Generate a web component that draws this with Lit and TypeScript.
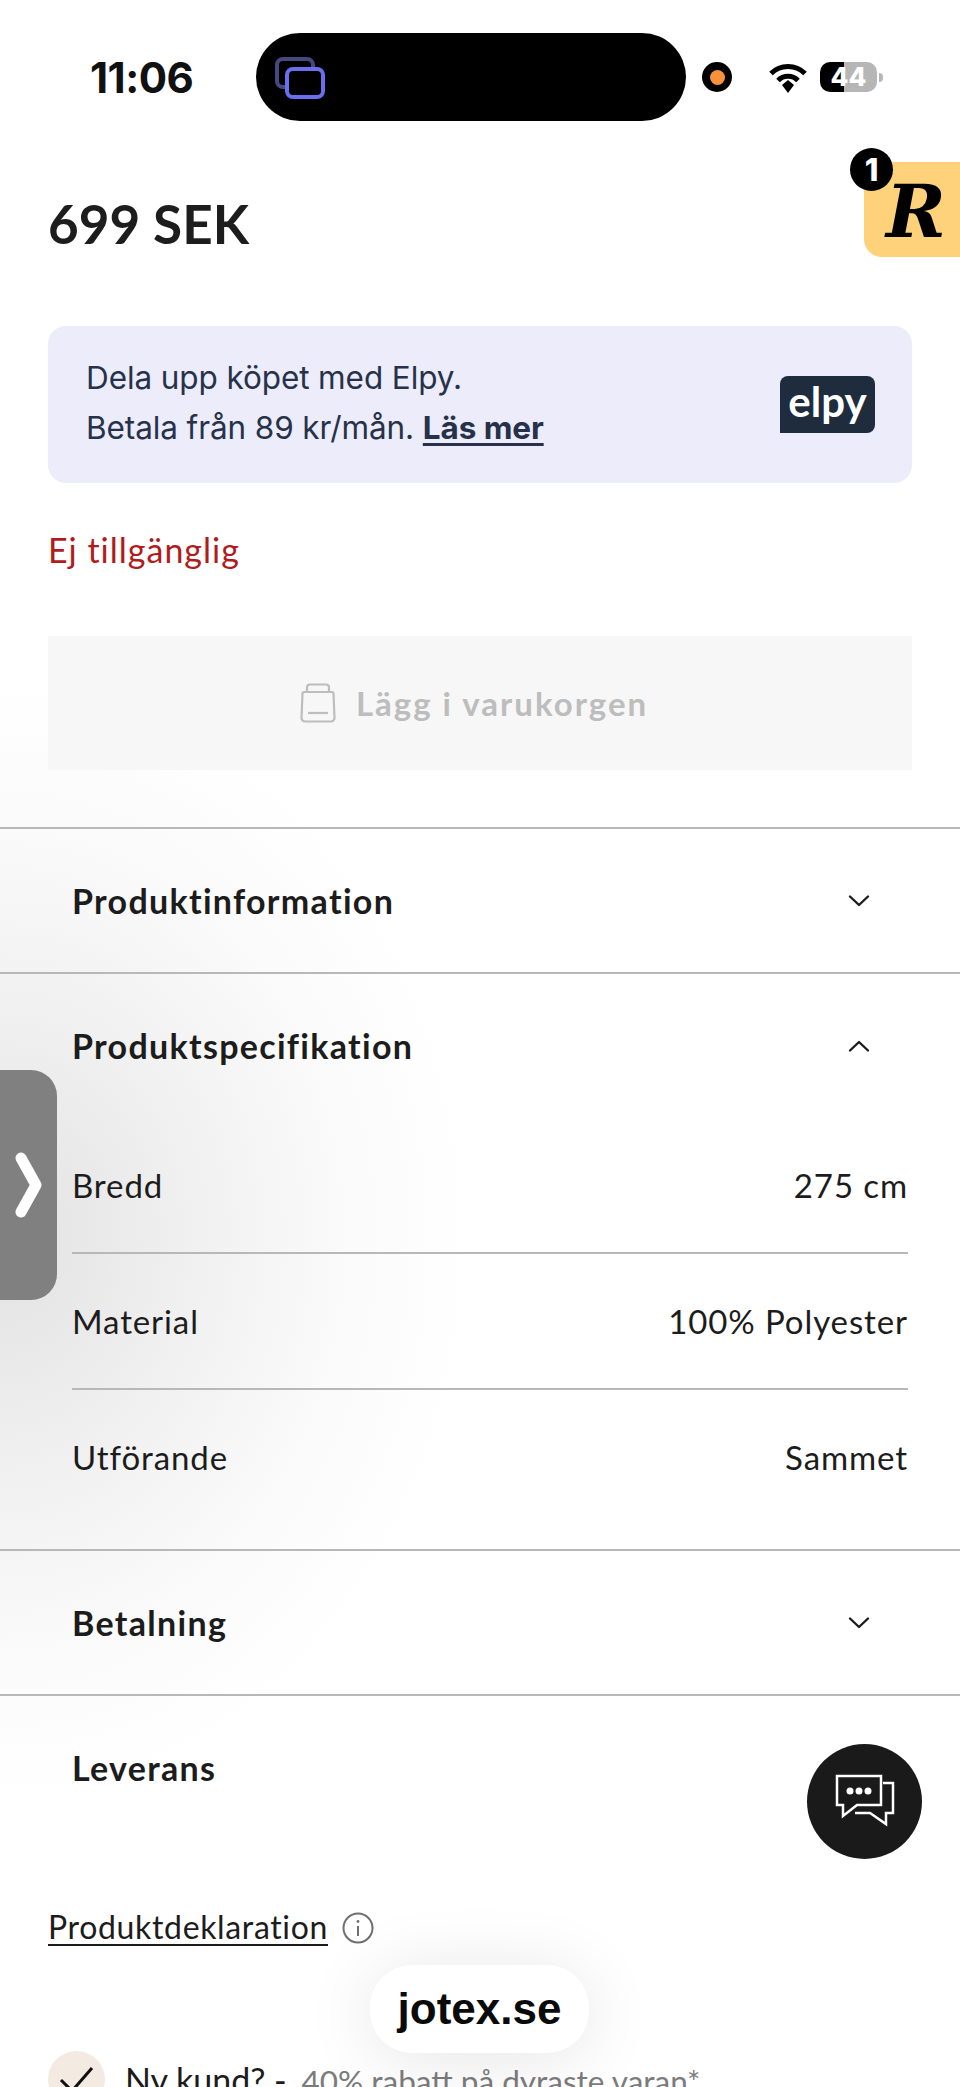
import { LitElement, html, css, svg } from 'lit';
import { customElement } from 'lit/decorators.js';

const chevron = (up: boolean) => html`<svg class="chev" width="24" height="14" viewBox="0 0 24 14">
  <path d=${up ? 'M3 11.5 12 3l9 8.5' : 'M3 2.5 12 11l9-8.5'} fill="none" stroke="#1c1c1c" stroke-width="2.4" stroke-linecap="round" stroke-linejoin="round"/>
</svg>`;

const specs = [
  ['Bredd', '275 cm'],
  ['Material', '100% Polyester'],
  ['Utförande', 'Sammet'],
];

@customElement('app-root')
export class AppRoot extends LitElement {
  static styles = css`
    :host {
      display: block;
      position: relative;
      width: 960px;
      height: 2087px;
      overflow: hidden;
      color: #1c1c1c;
      font-family: 'Lato', sans-serif;
      background: radial-gradient(ellipse 470px 560px at 0 1240px, #e2e2e2 0%, #f0f0f0 40%, #fafafa 72%, #ffffff 100%), #fff;
    }
    .status {
      height: 162px;
      position: relative;
    }
    .time {
      position: absolute;
      left: 90px;
      top: 54px;
      font: 700 42px/48px 'Inter', sans-serif;
      letter-spacing: -0.5px;
      color: #111;
    }
    .island {
      position: absolute;
      left: 256px;
      top: 33px;
      width: 430px;
      height: 88px;
      border-radius: 44px;
      background: #000;
    }
    .island svg {
      position: absolute;
      left: 17px;
      top: 22px;
    }
    .cam {
      position: absolute;
      left: 702px;
      top: 62px;
      width: 30px;
      height: 30px;
      border-radius: 50%;
      background: #000;
      display: flex;
      align-items: center;
      justify-content: center;
    }
    .cam i {
      width: 15px;
      height: 15px;
      border-radius: 50%;
      background: #f6923a;
    }
    .wifi {
      position: absolute;
      left: 768px;
      top: 62px;
    }
    .battery {
      position: absolute;
      left: 820px;
      top: 62px;
      width: 57px;
      height: 30px;
      border-radius: 10px;
      background: linear-gradient(90deg, #000 0 24px, #b6b6b6 24px);
      color: #fff;
      font: 800 26px/30px 'Inter', sans-serif;
      text-align: center;
    }
    .tip {
      position: absolute;
      left: 879px;
      top: 73px;
      width: 4px;
      height: 9px;
      border-radius: 0 4px 4px 0;
      background: #b6b6b6;
    }
    .rewards {
      position: absolute;
      left: 864px;
      top: 162px;
      width: 96px;
      height: 95px;
      border-radius: 0 0 0 18px;
      background: #fdd27a;
      color: #000;
      font: italic 700 72px/95px 'DejaVu Serif', serif;
      text-align: center;
      z-index: 2;
    }
    .rewards span {
      display: block;
      margin-left: 8px;
      margin-top: 2px;
    }
    .count {
      position: absolute;
      left: 850px;
      top: 148px;
      width: 43px;
      height: 43px;
      border-radius: 50%;
      background: #000;
      color: #fff;
      font: 800 31px/43px 'Inter', sans-serif;
      text-align: center;
      z-index: 3;
    }
    .price {
      margin: 32px 48px 72px;
      font-size: 53px;
      line-height: 60px;
      font-weight: 700;
      color: #1d1d1d;
    }
    .elpy {
      margin: 0 48px;
      height: 157px;
      box-sizing: border-box;
      padding: 0 38px 4px;
      border-radius: 18px;
      background: #ececfb;
      display: flex;
      align-items: center;
      justify-content: space-between;
      color: #27324a;
      font: 400 31.5px/50px 'Inter', sans-serif;
      letter-spacing: -0.1px;
    }
    .elpy b {
      font-weight: 700;
      text-decoration: underline;
      text-underline-offset: 4px;
    }
    .elpy-logo {
      width: 95px;
      height: 57px;
      margin: 4px -1px 0 0;
      border-radius: 8px 8px 8px 0;
      background: #1e2c3d;
      color: #fff;
      font: 700 42px/50px 'Lato', sans-serif;
      letter-spacing: 0;
      text-align: center;
    }
    .avail {
      margin: 47px 48px 66px;
      font-size: 34px;
      line-height: 40px;
      letter-spacing: 1px;
      color: #b01c1c;
    }
    .add {
      margin: 0 48px 57px;
      padding-right: 12px;
      height: 134px;
      background: #f7f7f7;
      display: flex;
      align-items: center;
      justify-content: center;
      gap: 20px;
      color: #bdbdbd;
      font-size: 33px;
      font-weight: 700;
      letter-spacing: 2px;
    }
    .item {
      border-top: 2px solid #b8b8b8;
    }
    .item:last-of-type {
      border-bottom: 2px solid #b8b8b8;
    }
    .head {
      height: 143px;
      padding: 0 89px 0 72px;
      display: flex;
      align-items: center;
      justify-content: space-between;
      font-size: 34px;
      font-weight: 700;
      letter-spacing: 1.3px;
    }
    .rows {
      margin: 0 52px 0 72px;
      padding-bottom: 23px;
    }
    .row {
      box-sizing: border-box;
      height: 135px;
      display: flex;
      align-items: center;
      justify-content: space-between;
      font-size: 33px;
      letter-spacing: 0.9px;
    }
    .row + .row {
      border-top: 2px solid #b8b8b8;
      height: 136px;
    }
    .row:last-child {
      height: 136px;
      margin-bottom: 2px;
    }
    .decl {
      margin: 65px 48px 0;
      height: 44px;
      display: flex;
      align-items: center;
      gap: 14px;
      font-size: 32px;
      letter-spacing: 0.65px;
    }
    .decl span {
      text-decoration: underline;
      text-underline-offset: 5px;
      text-decoration-thickness: 2px;
    }
    .decl svg {
      margin-top: 4px;
    }
    .promo {
      margin: 103px 48px 0;
      height: 57px;
      display: flex;
      align-items: center;
      gap: 20px;
      font-size: 34px;
      white-space: nowrap;
    }
    .promo em {
      font-style: normal;
      color: #7c7c7c;
      font-size: 31.5px;
      margin-left: 6px;
    }
    .tick {
      flex: none;
      width: 57px;
      height: 57px;
      border-radius: 50%;
      background: #f3ebe1;
      display: flex;
      align-items: center;
      justify-content: center;
    }
    .tab {
      position: absolute;
      left: 0;
      top: 1070px;
      width: 57px;
      height: 230px;
      border-radius: 0 26px 26px 0;
      background: #808080;
      display: flex;
      align-items: center;
      justify-content: flex-end;
      padding-right: 15px;
      box-sizing: border-box;
    }
    .chat {
      position: absolute;
      left: 807px;
      top: 1744px;
      width: 115px;
      height: 115px;
      border-radius: 50%;
      background: #1a1a1a;
    }
    .site {
      position: absolute;
      left: 370px;
      top: 1965px;
      width: 219px;
      height: 88px;
      border-radius: 42px;
      background: #fff;
      box-shadow: 0 6px 70px rgba(0, 0, 0, 0.1);
      color: #0a0a0a;
      font: 700 44px/88px 'Liberation Sans', sans-serif;
      text-align: center;
    }
  `;

  render() {
    return html`
      <div class="status">
        <div class="time">11:06</div>
        <div class="island">
          <svg width="56" height="50" viewBox="0 0 56 50" fill="none" stroke-width="4">
            <rect x="4" y="4" width="36" height="28" rx="6" stroke="#46497f"/>
            <rect x="14" y="14" width="36" height="28" rx="6" fill="#000" stroke="#6a6ff0"/>
          </svg>
        </div>
        <div class="cam"><i></i></div>
        <svg class="wifi" width="40" height="32" viewBox="0 0 40 32" fill="none" stroke="#000" stroke-width="5">
          ${svg`<path d="M3 11.5a24 24 0 0 1 34 0"/><path d="M10 18.5a14 14 0 0 1 20 0"/><path d="M14 23l6-5 6 5-6 8z" fill="#000" stroke="none"/>`}
        </svg>
        <div class="battery">44</div>
        <div class="tip"></div>
      </div>

      <div class="rewards"><span>R</span></div>
      <div class="count">1</div>

      <div class="price">699 SEK</div>

      <div class="elpy">
        <div>Dela upp köpet med Elpy.<br />Betala från 89 kr/mån. <b>Läs mer</b></div>
        <div class="elpy-logo">elpy</div>
      </div>

      <div class="avail">Ej tillgänglig</div>

      <div class="add">
        <svg width="36" height="40" viewBox="0 0 36 40" fill="none" stroke="#bdbdbd" stroke-width="2.2">
          <path d="M4 9h28a1.500 1.500 0 0 1 1.500 1.500L34.500 35a3.500 3.500 0 0 1-3.500 3.500H5A3.500 3.500 0 0 1 1.500 35L2.500 10.500A1.500 1.500 0 0 1 4 9z"/>
          <path d="M7 9V4.500a3 3 0 0 1 3-3h16a3 3 0 0 1 3 3V9"/>
          <path d="M8 30h20"/>
        </svg>
        Lägg i varukorgen
      </div>

      <div class="item"><div class="head">Produktinformation ${chevron(false)}</div></div>
      <div class="item">
        <div class="head">Produktspecifikation ${chevron(true)}</div>
        <div class="rows">
          ${specs.map((s) => html`<div class="row"><span>${s[0]}</span><span>${s[1]}</span></div>`)}
        </div>
      </div>
      <div class="item"><div class="head">Betalning ${chevron(false)}</div></div>
      <div class="item"><div class="head">Leverans ${chevron(false)}</div></div>

      <div class="decl">
        <span>Produktdeklaration</span>
        <svg width="32" height="32" viewBox="0 0 32 32" fill="none" stroke="#6f6f6f" stroke-width="2">
          <circle cx="16" cy="16" r="14.500"/>
          <path d="M16 14v10"/>
          <circle cx="16" cy="9.500" r="1.400" fill="#6f6f6f" stroke="none"/>
        </svg>
      </div>

      <div class="promo">
        <div class="tick">
          <svg width="36" height="28" viewBox="0 0 36 28" fill="none" stroke="#111" stroke-width="3">
            <path d="M2 14l11 11L33 2"/>
          </svg>
        </div>
        <div>Ny kund? - <em>40% rabatt på dyraste varan*</em></div>
      </div>

      <div class="tab">
        <svg width="28" height="68" viewBox="0 0 28 68" fill="none" stroke="#fff" stroke-width="11" stroke-linecap="round" stroke-linejoin="round">
          <path d="M7 7l15 27L7 61"/>
        </svg>
      </div>

      <div class="chat">
        <svg width="115" height="115" viewBox="0 0 115 115" fill="none" stroke="#fff" stroke-width="2.500">
          <path d="M30 32h44v29H50L36 72V61h-6z"/>
          <path d="M76 39h10v30h-7v11L63 69H48"/>
          <circle cx="43" cy="47" r="3.500" fill="#fff" stroke="none"/>
          <circle cx="52" cy="47" r="3.500" fill="#fff" stroke="none"/>
          <circle cx="61" cy="47" r="3.500" fill="#fff" stroke="none"/>
        </svg>
      </div>

      <div class="site">jotex.se</div>
    `;
  }
}
